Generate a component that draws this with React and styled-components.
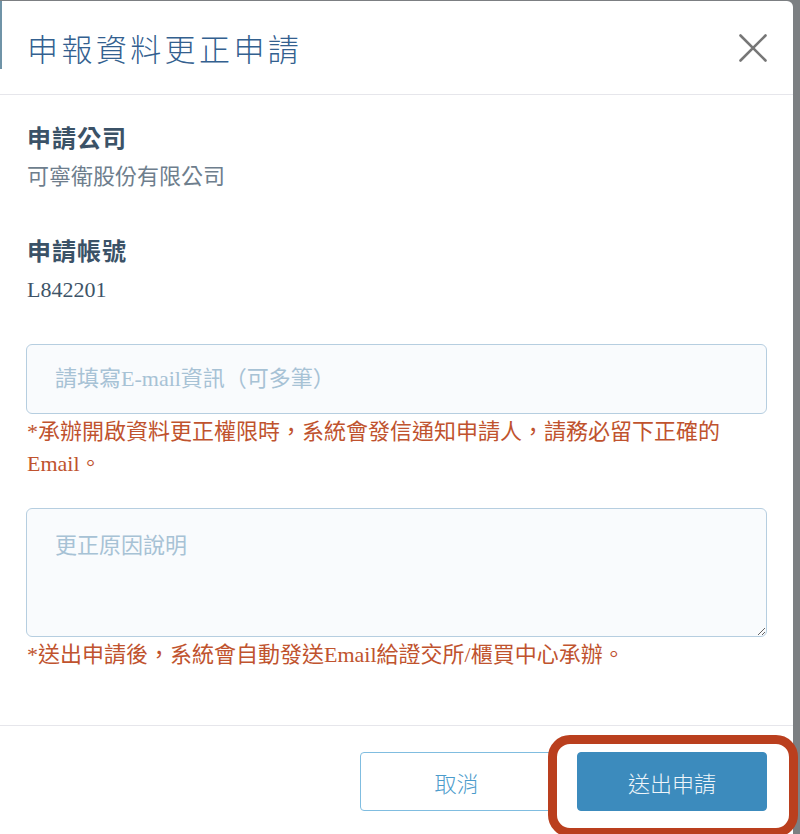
import React from 'react'
import styled, { createGlobalStyle } from 'styled-components'

const GlobalStyle = createGlobalStyle`
  html, body {
    margin: 0;
    padding: 0;
    background: #7c7f82;
  }
  body {
    font-family: "Liberation Serif", "Noto Sans CJK TC", serif;
  }
`

const Backdrop = styled.div`
  width: 800px;
  height: 834px;
  overflow: hidden;
  position: relative;
  padding-top: 1px;
  box-sizing: border-box;
`

const Modal = styled.div`
  width: 793px;
  min-height: 833px;
  background: #fff;
  border-top-right-radius: 6px;
  display: flex;
  flex-direction: column;
`

const Header = styled.div`
  position: relative;
  height: 93px;
  border-bottom: 1px solid #e6e6eb;
  display: flex;
  align-items: center;
  justify-content: space-between;
  padding: 0 24px 0 27px;

  /* the accent line on the left edge */
  &::before {
    content: '';
    position: absolute;
    left: 0;
    top: 0;
    width: 2px;
    height: 68px;
    background: #6f93a7;
  }
`

const Title = styled.h1`
  margin: 0;
  font-family: "Noto Sans CJK TC", sans-serif;
  font-weight: 300;
  font-size: 31px;
  letter-spacing: 3.4px;
  color: #33608f;
`

const CloseButton = styled.button`
  border: none;
  background: none;
  padding: 0;
  width: 32px;
  height: 32px;
  display: flex;
  align-items: center;
  justify-content: center;
  cursor: pointer;
`

const Body = styled.div`
  padding: 25px 26px 54px 26px;
  display: flex;
  flex-direction: column;
  border-bottom: 1px solid #e6e6eb;
`

const Label = styled.div`
  font-family: "Noto Sans CJK TC", sans-serif;
  font-weight: 700;
  font-size: 24px;
  letter-spacing: 1px;
  line-height: 34px;
  color: #3b5267;
  margin-top: ${p => p.first ? '0' : '40px'};
  padding-left: 1px;
`

const Value = styled.div`
  font-size: 22px;
  line-height: 32px;
  margin-top: 7px;
  padding-left: 1px;
  color: ${p => p.dark ? '#3e5468' : '#6e7e8d'};
`

const EmailInput = styled.input`
  margin-top: 38px;
  height: 70px;
  box-sizing: border-box;
  width: 100%;
  border: 1.5px solid #b6cee0;
  border-radius: 6px;
  background: #f9fbfd;
  padding: 0 28px;
  font-family: inherit;
  font-size: 22px;
  color: #3e5468;
  outline: none;

  &::placeholder {
    color: #a7c2d5;
  }
`

const ReasonInput = styled.textarea`
  margin-top: 28px;
  height: 129px;
  box-sizing: border-box;
  width: 100%;
  border: 1.5px solid #b6cee0;
  border-radius: 6px;
  background: #f9fbfd;
  padding: 18px 28px;
  font-family: inherit;
  font-size: 22px;
  color: #3e5468;
  outline: none;
  resize: vertical;
  display: block;

  &::placeholder {
    color: #a7c2d5;
  }
`

const Note = styled.p`
  margin: 2px 0 0;
  font-size: 22px;
  line-height: 32px;
  color: #c0532e;
  padding-left: 1px;
`

const Footer = styled.div`
  display: flex;
  justify-content: flex-end;
  gap: 24px;
  padding: 26px 26px 0;
`

const Button = styled.button`
  width: ${p => p.primary ? '190px' : '193px'};
  height: 59px;
  border-radius: 4px;
  font-family: "Noto Sans CJK TC", sans-serif;
  font-weight: 300;
  font-size: 22px;
  cursor: pointer;
  border: 1px solid ${p => p.primary ? '#3c8bbd' : '#80bde0'};
  background: ${p => p.primary ? '#3c8bbd' : '#fff'};
  color: ${p => p.primary ? '#eef5fa' : '#4b9bcb'};
`

const Highlight = styled.div`
  position: absolute;
  left: 548px;
  top: 735px;
  width: 250px;
  height: 102px;
  box-sizing: border-box;
  border: 9px solid #ba3f1e;
  border-radius: 22px;
  pointer-events: none;
`

const CloseIcon = () => (
  <svg width="28" height="28" viewBox="0 0 28 28">
    <path d="M1.5 1.5 L26.5 26.5 M26.5 1.5 L1.5 26.5" stroke="#777" strokeWidth="2.6" strokeLinecap="round" />
  </svg>
)

export default function App() {
  return (
    <>
      <GlobalStyle />
      <Backdrop>
        <Modal>
          <Header>
            <Title>申報資料更正申請</Title>
            <CloseButton aria-label="close">
              <CloseIcon />
            </CloseButton>
          </Header>
          <Body>
            <Label first>申請公司</Label>
            <Value>可寧衛股份有限公司</Value>
            <Label>申請帳號</Label>
            <Value dark>L842201</Value>
            <EmailInput placeholder="請填寫E-mail資訊（可多筆）" />
            <Note>*承辦開啟資料更正權限時，系統會發信通知申請人，請務必留下正確的Email。</Note>
            <ReasonInput placeholder="更正原因說明" />
            <Note>*送出申請後，系統會自動發送Email給證交所/櫃買中心承辦。</Note>
          </Body>
          <Footer>
            <Button>取消</Button>
            <Button primary>送出申請</Button>
          </Footer>
        </Modal>
        <Highlight />
      </Backdrop>
    </>
  )
}
